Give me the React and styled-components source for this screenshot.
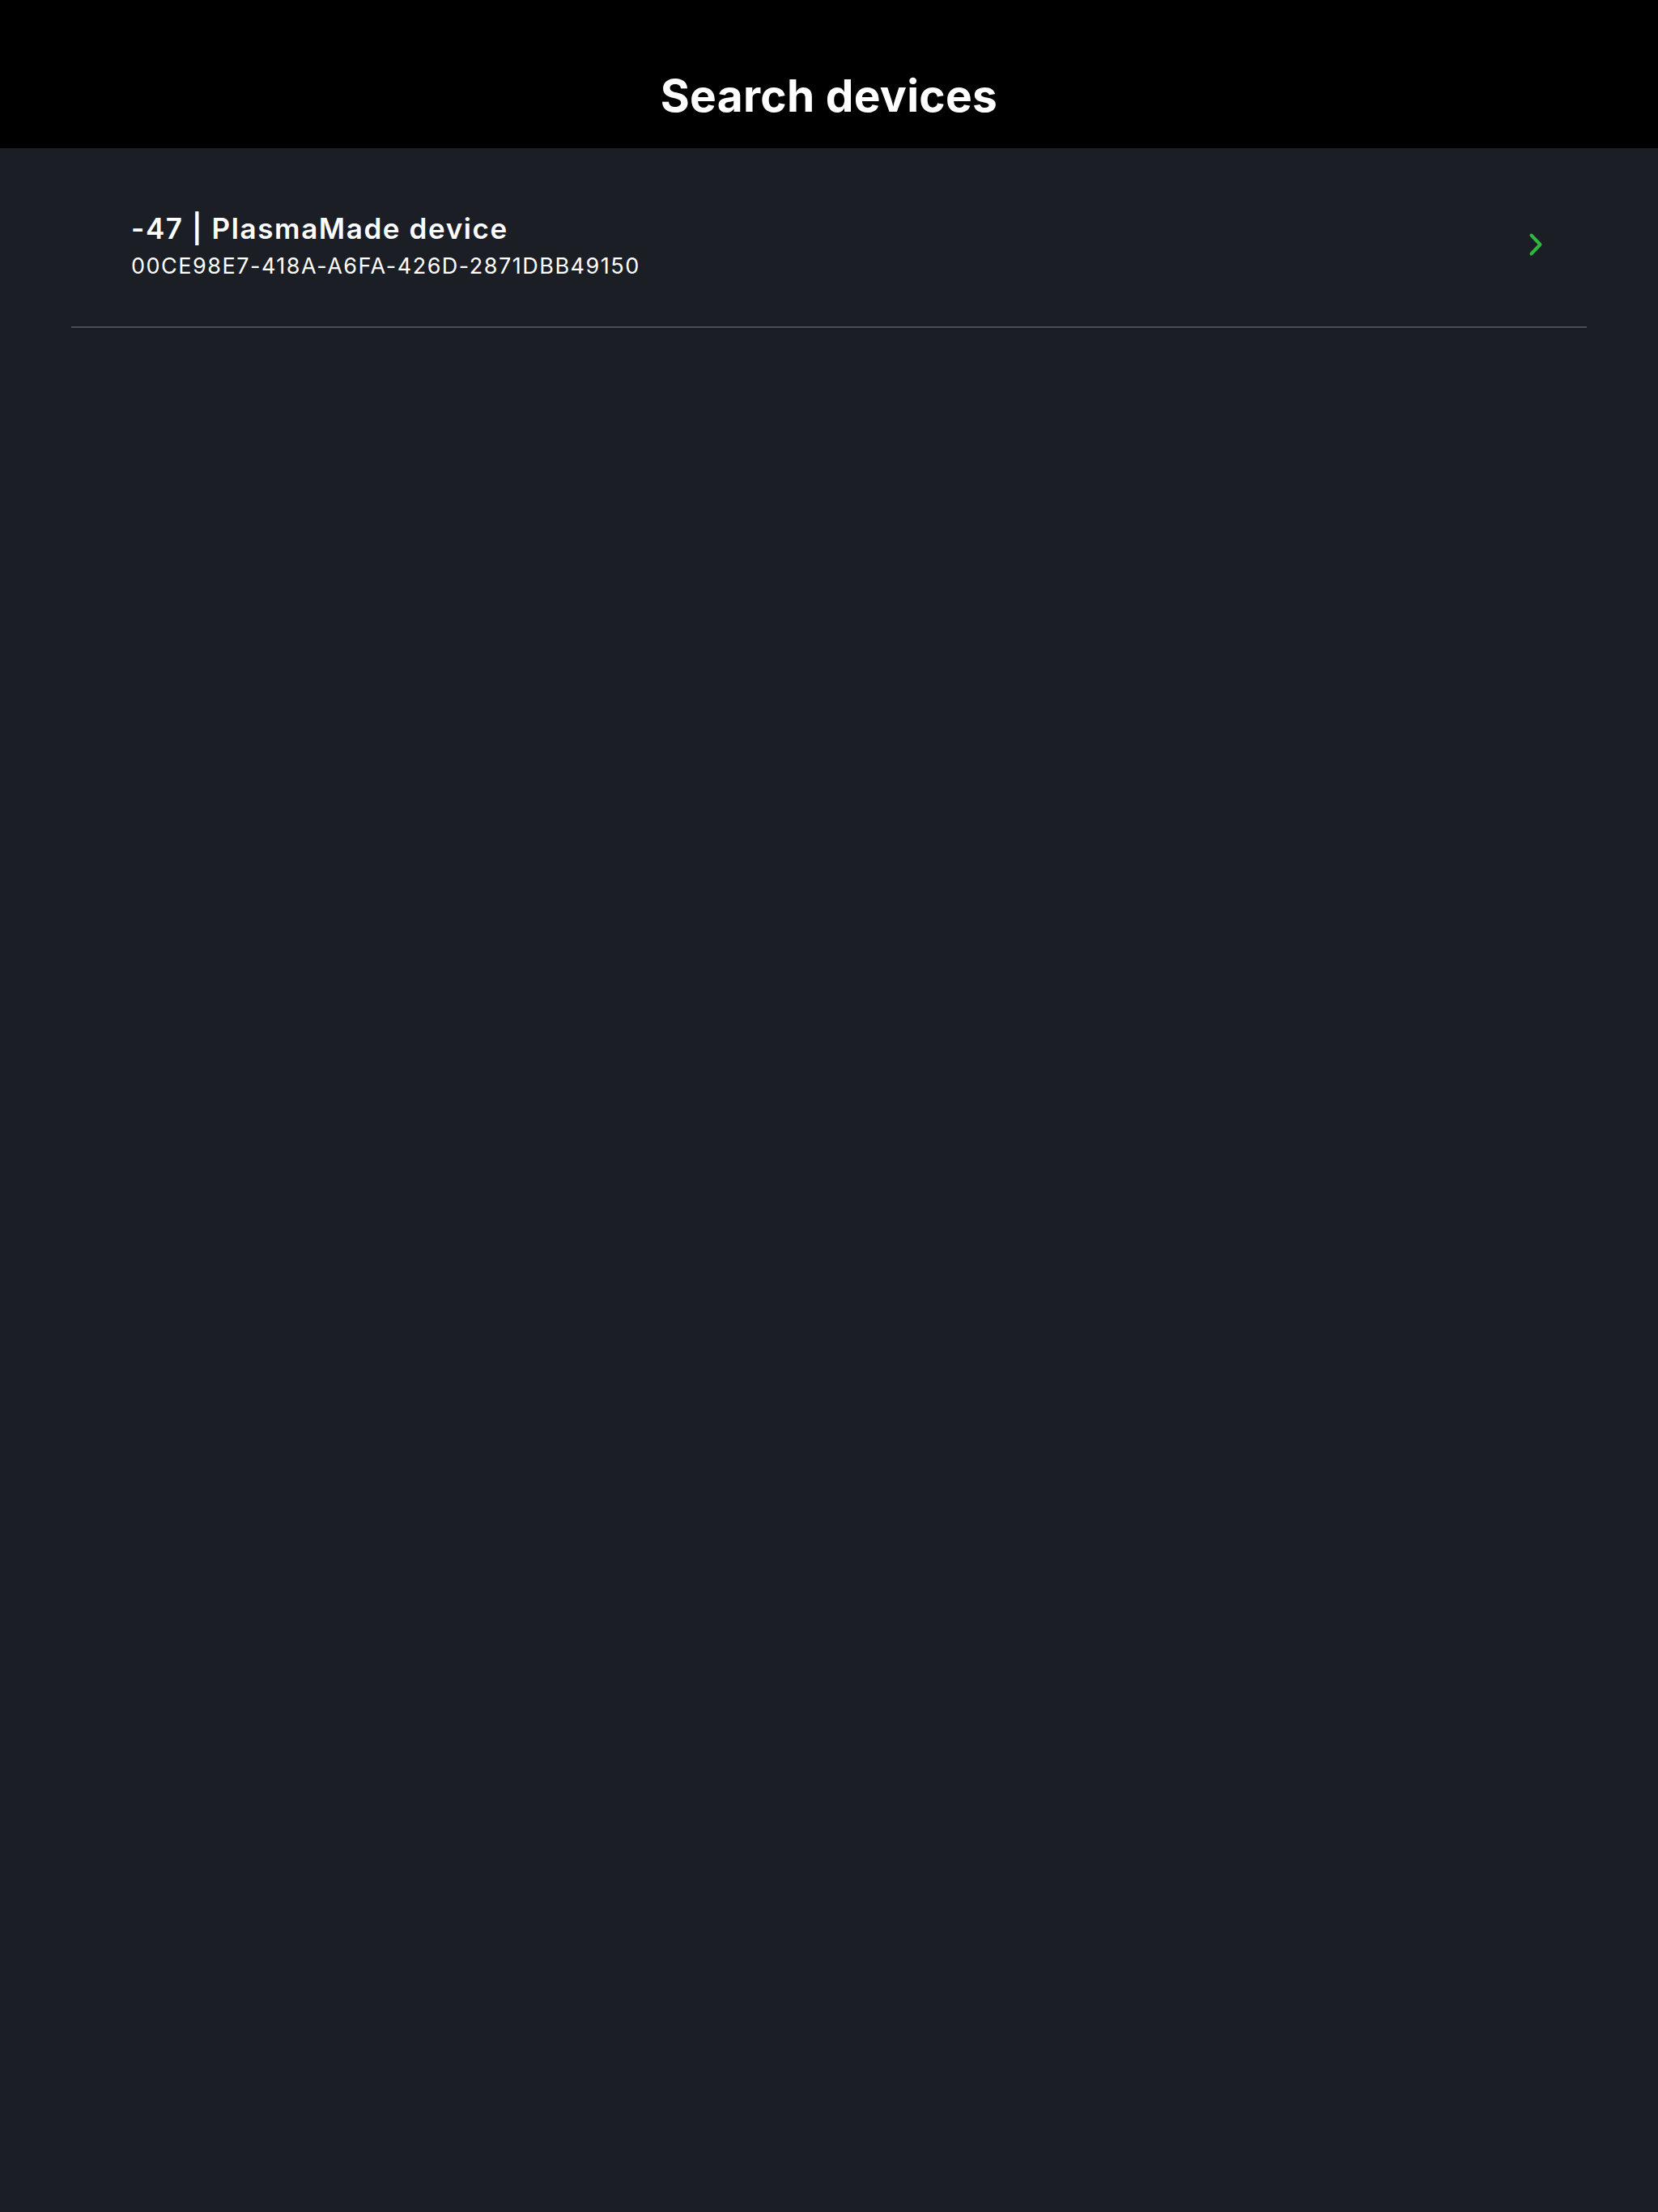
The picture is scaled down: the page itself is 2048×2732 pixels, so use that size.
import React from "react";
import styled, { createGlobalStyle } from "styled-components";

const GlobalStyle = createGlobalStyle`
  html, body {
    margin: 0;
    padding: 0;
    background: #1b1e25;
  }
  body {
    font-family: Inter, "Noto Sans", sans-serif;
    color: #ffffff;
  }
`;

const Page = styled.div`
  min-height: 2732px;
  background: #1b1e25;
`;

const Header = styled.header`
  height: 183px;
  background: #000000;
  display: flex;
  align-items: flex-end;
  justify-content: center;
  box-sizing: border-box;
  padding-bottom: 37px;
`;

const Title = styled.h1`
  margin: 0;
  font-size: 55px;
  font-weight: 700;
  line-height: 1;
  letter-spacing: 0.3px;
`;

const List = styled.ul`
  list-style: none;
  margin: 0;
  padding: 0 88px;
`;

const Row = styled.li`
  display: flex;
  align-items: center;
  justify-content: space-between;
  padding: 78px 52px 58px 74px;
  border-bottom: 2px solid #4b4e56;
`;

const Texts = styled.div`
  display: flex;
  flex-direction: column;
  gap: 10px;
`;

const DeviceName = styled.div`
  font-size: 35px;
  font-weight: 600;
  line-height: 42px;
  letter-spacing: 1.6px;
`;

const DeviceId = styled.div`
  font-size: 27px;
  font-weight: 400;
  line-height: 32px;
  letter-spacing: 1.5px;
`;

const ChevronIcon = styled.svg`
  flex: none;
  margin-bottom: 2px;
`;

const Chevron = () => (
  <ChevronIcon width="20" height="30" viewBox="0 0 20 30">
    <path
      d="M3.5 3.5 L14.5 15 L3.5 26.5"
      fill="none"
      stroke="#2eb83f"
      strokeWidth="4"
      strokeLinecap="round"
      strokeLinejoin="round"
    />
  </ChevronIcon>
);

const devices = [
  { rssi: -47, name: "PlasmaMade device", id: "00CE98E7-418A-A6FA-426D-2871DBB49150" },
];

export default function App() {
  return (
    <Page>
      <GlobalStyle />
      <Header>
        <Title>Search devices</Title>
      </Header>
      <List>
        {devices.map((d) => (
          <Row key={d.id}>
            <Texts>
              <DeviceName>
                {d.rssi} | {d.name}
              </DeviceName>
              <DeviceId>{d.id}</DeviceId>
            </Texts>
            <Chevron />
          </Row>
        ))}
      </List>
    </Page>
  );
}
